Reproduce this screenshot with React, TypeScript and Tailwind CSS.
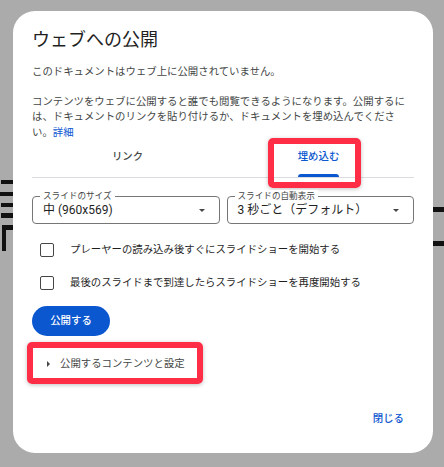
import React from 'react';

const font = "font-['Roboto','Noto_Sans_CJK_JP',sans-serif]";

function Select({ label, value }: { label: string; value: string }) {
  return (
    <div className="relative flex-1 h-[28px] border border-[#747775] rounded-[4px] flex items-center pl-[10px] pr-[14px]">
      <span className="absolute -top-[7px] left-[7px] bg-white px-[3px] text-[8.6px] leading-[12px] text-[#444746]">
        {label}
      </span>
      <span className="flex-1 text-[12px] leading-[16px] text-[#1f1f1f]">{value}</span>
      <span className="w-0 h-0 border-l-[3.5px] border-r-[3.5px] border-t-[3.5px] border-l-transparent border-r-transparent border-t-[#444746]" />
    </div>
  );
}

function CheckRow({ text, className }: { text: string; className: string }) {
  return (
    <div className={`flex items-center h-[20px] pl-[8px] ${className}`}>
      <span className="w-[14px] h-[14px] border-[1.5px] border-[#444746] rounded-[2px]" />
      <span className="ml-[16px] text-[10.4px] leading-[16px] text-[#1f1f1f]">{text}</span>
    </div>
  );
}

export default function App() {
  return (
    <div className={`relative w-[444px] h-[467px] bg-[#ababab] overflow-hidden pt-[11px] pl-[13px] ${font}`}>
      {/* slide behind the overlay */}
      <div className="absolute top-[180px] left-[1px] w-[12px] h-[4px] bg-[#111]" />
      <div className="absolute top-[192px] left-0 w-[13px] h-[4px] bg-[#111]" />
      <div className="absolute top-[203px] left-[1px] w-[12px] h-[4px] bg-[#111]" />
      <div className="absolute top-[213px] left-[1px] w-[12px] h-[5px] bg-[#111]" />
      <div className="absolute top-[225px] left-[2px] w-[11px] h-[5px] bg-[#111]" />
      <div className="absolute top-[225px] left-[2px] w-[4px] h-[26px] bg-[#111]" />
      <div className="absolute top-[207px] left-[433px] w-[11px] h-[5px] bg-[#111]" />
      <div className="absolute top-[241px] left-[433px] w-[11px] h-[5px] bg-[#111]" />

      {/* Dialog */}
      <div className="relative w-[420px] h-[442px] bg-white rounded-[22px] px-[19px] pt-[17px] flex flex-col">
        <h1 className="text-[18px] leading-[24px] text-[#1f1f1f]">ウェブへの公開</h1>

        <p className="mt-[12px] text-[10.4px] leading-[15.5px] text-[#444746]">
          このドキュメントはウェブ上に公開されていません。
        </p>
        <p className="mt-[14px] text-[10.4px] leading-[15.5px] text-[#444746]">
          コンテンツをウェブに公開すると誰でも閲覧できるようになります。公開するには、ドキュメントのリンクを貼り付けるか、ドキュメントを埋め込んでください。
          <span className="text-[#0b57d0]">詳細</span>
        </p>

        {/* Tabs */}
        <div className="flex border-b border-[#dadce0]">
          <div className="flex-1 h-[37px] pb-[3px] flex items-center justify-center text-[10.4px] font-medium text-[#444746]">
            リンク
          </div>
          <div className="relative flex-1 h-[37px] pb-[3px] flex items-center justify-center">
            <span className="relative h-full flex items-center text-[10.4px] font-medium text-[#0b57d0]">
              埋め込む
              <span className="absolute -bottom-[3px] left-0 right-0 h-[3px] rounded-t-[3px] bg-[#0b57d0]" />
            </span>
            <div className="absolute left-[45px] -top-[2px] w-[93px] h-[50px] border-[6px] border-[#ff2d46] rounded-[5px] shadow-[0_1px_4px_rgba(0,0,0,0.25)]" />
          </div>
        </div>

        {/* Selects */}
        <div className="mt-[18px] flex gap-[7px]">
          <Select label="スライドのサイズ" value="中 (960x569)" />
          <Select label="スライドの自動表示" value="3 秒ごと（デフォルト）" />
        </div>

        <CheckRow className="mt-[16px]" text="プレーヤーの読み込み後すぐにスライドショーを開始する" />
        <CheckRow className="mt-[13px]" text="最後のスライドまで到達したらスライドショーを再度開始する" />

        <button className="mt-[13px] w-[78px] h-[30px] rounded-full bg-[#0b57d0] text-white text-[10.4px] font-medium">
          公開する
        </button>

        {/* Expander */}
        <div className="relative mt-[13px] h-[29px] flex items-center">
          <span className="ml-[15px] w-0 h-0 border-t-[3px] border-b-[3px] border-l-[3.5px] border-t-transparent border-b-transparent border-l-[#444746]" />
          <span className="ml-[10px] text-[10.4px] text-[#444746]">公開するコンテンツと設定</span>
          <div className="absolute -left-[5px] -top-[7px] w-[176px] h-[42px] border-[6px] border-[#ff2d46] rounded-[5px] shadow-[0_1px_4px_rgba(0,0,0,0.25)]" />
        </div>

        <div className="mt-[26px] flex justify-end">
          <button className="h-[30px] px-[10px] text-[10.4px] font-medium text-[#0b57d0]">閉じる</button>
        </div>
      </div>
    </div>
  );
}
